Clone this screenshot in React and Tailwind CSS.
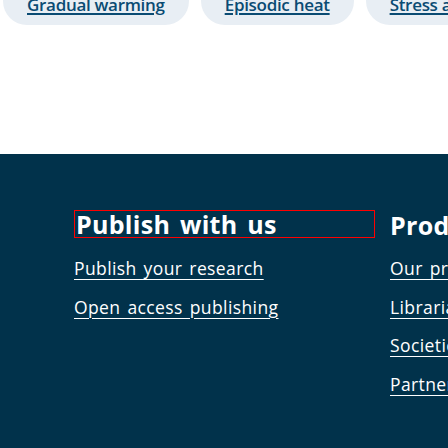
export default function App() {
  const font = { fontFamily: '"Open Sans", Lato, sans-serif' };
  const link = "underline underline-offset-[4px] decoration-1 tracking-[0.4px] [word-spacing:2px]";
  return (
    <div className="w-[448px] h-[448px] overflow-hidden bg-white" style={font}>
      <div className="flex gap-3 pl-[3px] h-[25px] items-end overflow-hidden whitespace-nowrap">
        {["Gradual warming", "Episodic heat", "Stress alleviation"].map((t) => (
          <div key={t} className="shrink-0 rounded-[24px] bg-[#e8eef4] px-6 h-[48px] flex items-end pb-[10px]">
            <span className="text-[17px] font-semibold tracking-[-0.3px] text-[#0a4b73] underline underline-offset-[2px] decoration-[1.5px] leading-[20px]">{t}</span>
          </div>
        ))}
      </div>
      <div className="mt-[129px] h-[294px] bg-[#01324b] pt-[56px] pl-[74px]">
        <div className="flex gap-[15px] whitespace-nowrap">
          <div className="w-[301px] shrink-0">
            <h2 className="h-[28px] border border-[#ff0000] text-[25px] font-bold tracking-[0.3px] [word-spacing:3px] text-white leading-[26px] px-[1px]">Publish with us</h2>
            <ul className="mt-[18px] flex flex-col gap-[14.5px] text-[17.5px] text-white leading-[24px]">
              <li><a className={link}>Publish your research</a></li>
              <li><a className={link}>Open access publishing</a></li>
            </ul>
          </div>
          <div className="shrink-0">
            <h2 className="h-[28px] text-[25px] font-bold tracking-[0.3px] [word-spacing:3px] text-white leading-[28px] pt-[1px]">Products and services</h2>
            <ul className="mt-[18px] flex flex-col gap-[14.5px] text-[17.5px] text-white leading-[24px]">
              <li><a className={link}>Our products</a></li>
              <li><a className={link}>Librarians</a></li>
              <li><a className={link}>Societies</a></li>
              <li><a className={link}>Partners and advertisers</a></li>
            </ul>
          </div>
        </div>
      </div>
    </div>
  );
}
